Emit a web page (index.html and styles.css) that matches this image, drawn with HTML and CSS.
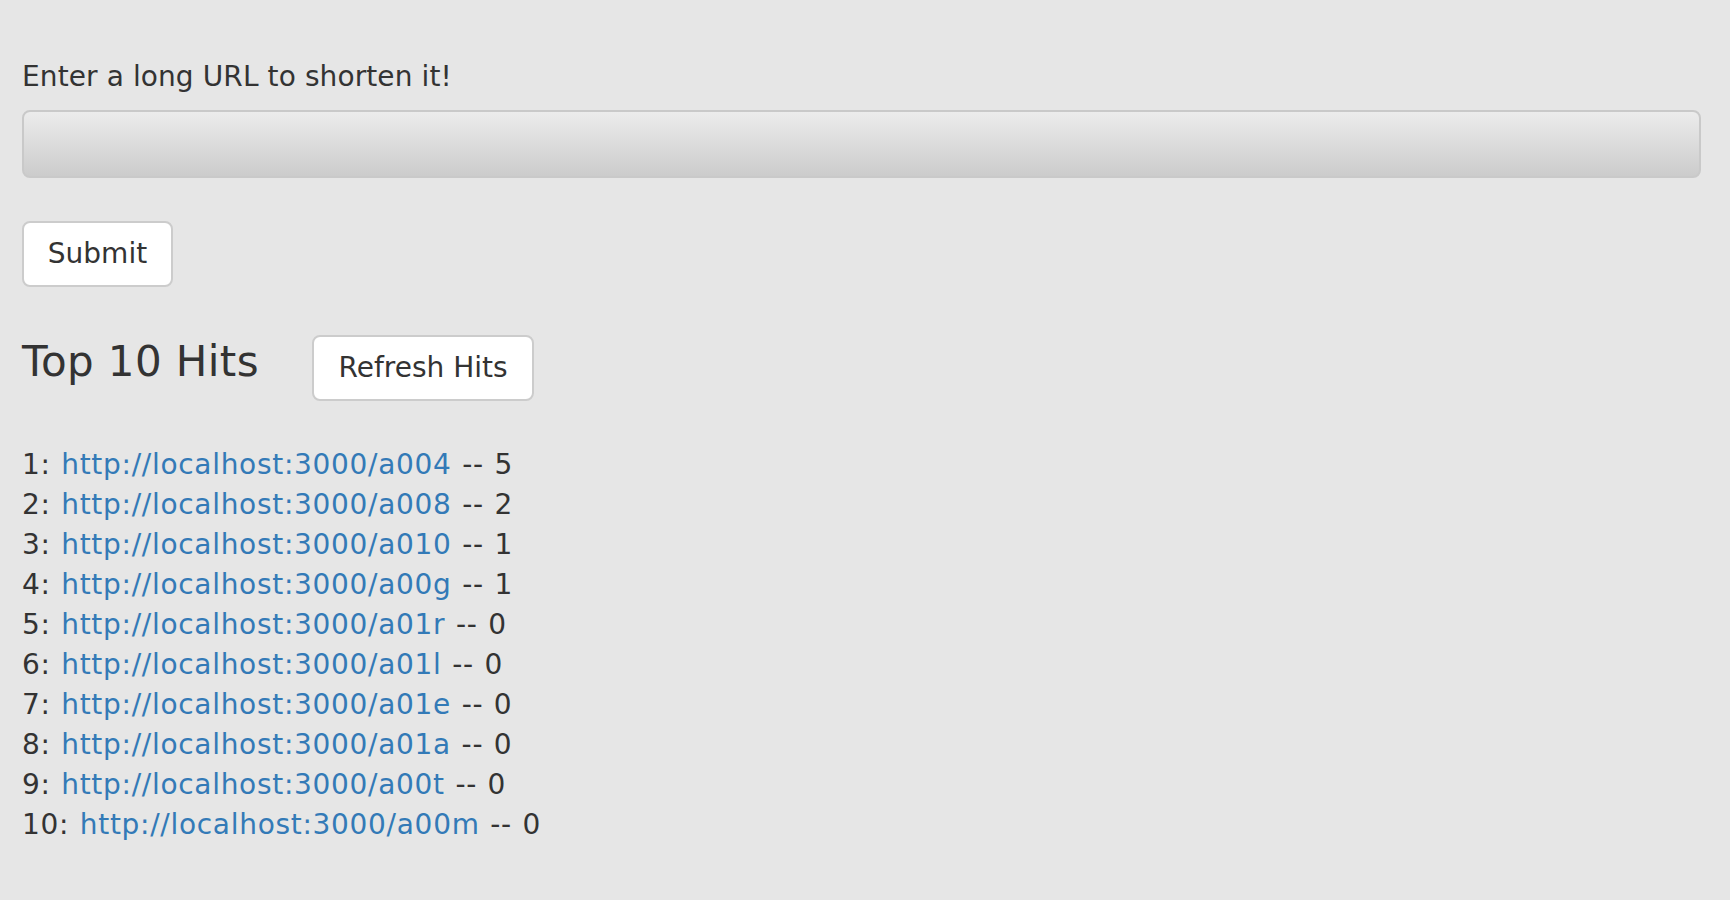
FILE: index.html
```html
<!DOCTYPE html>
<html>
<head>
<meta charset="utf-8">
<title>URL Shortener</title>
<link rel="stylesheet" href="styles.css">
</head>
<body>
<main class="page">
  <form class="shorten-form">
    <label class="form-label" for="longUrl">Enter a long URL to shorten it!</label>
    <input class="url-input" id="longUrl" type="text">
    <button class="btn btn-submit" type="button">Submit</button>
  </form>
  <section class="hits">
    <div class="hits-header">
      <h2 class="hits-title">Top 10 Hits</h2>
      <button class="btn btn-refresh" type="button">Refresh Hits</button>
    </div>
    <ol class="hits-list">
      <li>1: <a href="#">http://localhost:3000/a004</a> -- 5</li>
      <li>2: <a href="#">http://localhost:3000/a008</a> -- 2</li>
      <li>3: <a href="#">http://localhost:3000/a010</a> -- 1</li>
      <li>4: <a href="#">http://localhost:3000/a00g</a> -- 1</li>
      <li>5: <a href="#">http://localhost:3000/a01r</a> -- 0</li>
      <li>6: <a href="#">http://localhost:3000/a01l</a> -- 0</li>
      <li>7: <a href="#">http://localhost:3000/a01e</a> -- 0</li>
      <li>8: <a href="#">http://localhost:3000/a01a</a> -- 0</li>
      <li>9: <a href="#">http://localhost:3000/a00t</a> -- 0</li>
      <li>10: <a href="#">http://localhost:3000/a00m</a> -- 0</li>
    </ol>
  </section>
</main>
</body>
</html>
```
FILE: styles.css
```css
html, body {
  margin: 0;
  padding: 0;
  background: #e6e6e6;
}
body {
  font-family: "DejaVu Sans", Verdana, sans-serif;
  font-size: 28px;
  line-height: 40px;
  color: #333333;
}
.page {
  padding: 57px 29px 0 22px;
}
.shorten-form {
  display: flex;
  flex-direction: column;
  align-items: flex-start;
}
.form-label {
  display: block;
  letter-spacing: 0.1px;
}
.url-input {
  display: block;
  box-sizing: border-box;
  width: 100%;
  height: 68px;
  margin: 13px 0 0;
  border: 2px solid #c9c9c9;
  border-radius: 8px;
  background: linear-gradient(to bottom, #ececec 0%, #dcdcdc 50%, #cccccc 100%);
  font: inherit;
  padding: 0 24px;
  outline: none;
}
.btn {
  box-sizing: border-box;
  height: 66px;
  background: #ffffff;
  border: 2px solid #cccccc;
  border-radius: 8px;
  font-family: "DejaVu Sans", Verdana, sans-serif;
  font-size: 28px;
  line-height: 40px;
  color: #333333;
  padding: 0;
  cursor: pointer;
}
.btn-submit {
  width: 151px;
  margin-top: 43px;
}
.hits-header {
  display: flex;
  align-items: flex-start;
  gap: 53px;
  margin-top: 48px;
}
.hits-title {
  margin: 3px 0 0;
  font-size: 42px;
  line-height: 48px;
  font-weight: normal;
  letter-spacing: 0.4px;
}
.btn-refresh {
  width: 222px;
}
.hits-list {
  list-style: none;
  margin: 44px 0 0;
  padding: 0;
}
.hits-list li {
  letter-spacing: 0.7px;
  word-spacing: 1px;
}
.hits-list a {
  color: #337ab7;
  text-decoration: none;
}
```
